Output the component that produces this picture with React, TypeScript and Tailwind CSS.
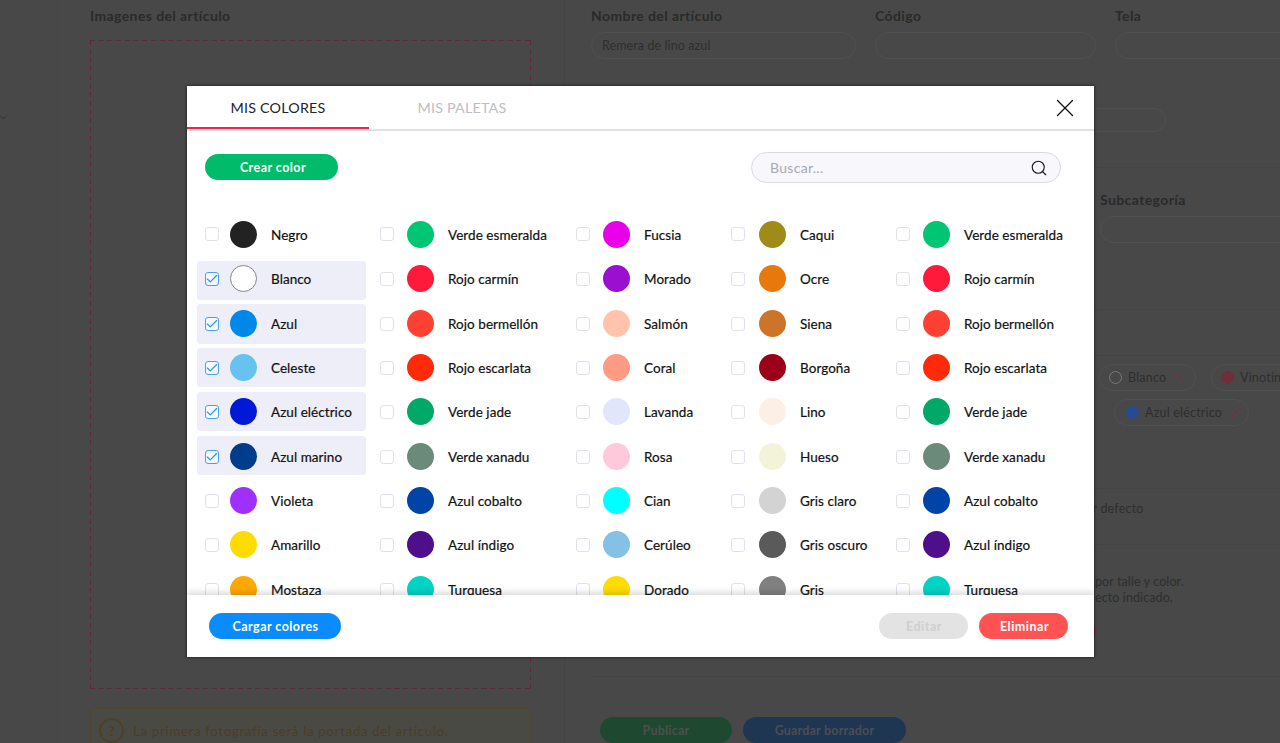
import { Check, ChevronDown, Search, X } from "lucide-react";

type Color = { n: string; c: string; on?: boolean; line?: boolean };

const second: Color[] = [
  { n: "Verde esmeralda", c: "#00c572" },
  { n: "Rojo carmín", c: "#ff1a3c" },
  { n: "Rojo bermellón", c: "#ff4133" },
  { n: "Rojo escarlata", c: "#ff2a0a" },
  { n: "Verde jade", c: "#00a968" },
  { n: "Verde xanadu", c: "#6b8a7a" },
  { n: "Azul cobalto", c: "#0044a8" },
  { n: "Azul índigo", c: "#4f0f8a" },
  { n: "Turquesa", c: "#00d4c4" },
];

const columns: { width: string; gap: string; items: Color[] }[] = [
  {
    width: "w-[175px]",
    gap: "mr-[11px]",
    items: [
      { n: "Negro", c: "#222222" },
      { n: "Blanco", c: "#ffffff", on: true, line: true },
      { n: "Azul", c: "#0088e8", on: true },
      { n: "Celeste", c: "#66c2ee", on: true },
      { n: "Azul eléctrico", c: "#0019d6", on: true },
      { n: "Azul marino", c: "#003c8c", on: true },
      { n: "Violeta", c: "#a030ff" },
      { n: "Amarillo", c: "#ffdc00" },
      { n: "Mostaza", c: "#ffa800" },
    ],
  },
  { width: "w-[196px]", gap: "mr-[13px]", items: second },
  {
    width: "w-[155px]",
    gap: "mr-[13px]",
    items: [
      { n: "Fucsia", c: "#e800e8" },
      { n: "Morado", c: "#9a0fd0" },
      { n: "Salmón", c: "#ffc4ab" },
      { n: "Coral", c: "#ff9a85" },
      { n: "Lavanda", c: "#e2e6fa" },
      { n: "Rosa", c: "#ffc9dc" },
      { n: "Cian", c: "#00ffff" },
      { n: "Cerúleo", c: "#85c1e5" },
      { n: "Dorado", c: "#ffdc00" },
    ],
  },
  {
    width: "w-[165px]",
    gap: "mr-[14px]",
    items: [
      { n: "Caqui", c: "#a08a18" },
      { n: "Ocre", c: "#e8780c" },
      { n: "Siena", c: "#cc7528" },
      { n: "Borgoña", c: "#9c0018" },
      { n: "Lino", c: "#fcefe6" },
      { n: "Hueso", c: "#f3f3d9" },
      { n: "Gris claro", c: "#d3d3d3" },
      { n: "Gris oscuro", c: "#5a5a5a" },
      { n: "Gris", c: "#808080" },
    ],
  },
  { width: "w-[198px]", gap: "mr-[13px]", items: second },
];

const selectedRow: Record<number, string> = {
  1: "h-[39px] pt-[4px]",
  2: "-mt-[1.67px] mb-[1.17px] h-[39.5px] pt-[5.67px]",
  3: "-mt-[2px] mb-[1.5px] h-[39.5px] pt-[6px]",
  4: "-mt-[2.33px] mb-[1.83px] h-[39.5px] pt-[6.33px]",
  5: "-mt-[2.67px] mb-[2.17px] h-[39.5px] pt-[6.67px]",
};

function Row({ item, gap, index }: { item: Color; gap: string; index: number }) {
  return (
    <div
      className={`flex shrink-0 items-start rounded-[3px] pl-2 ${
        item.on ? `w-[169px] bg-[#eeeef8] ${selectedRow[index]}` : "h-[39px] pt-[4px]"
      }`}
    >
      <span
        className={`flex h-[14px] w-[14px] shrink-0 items-center justify-center rounded-[3px] border-[1.5px] ${gap} ${
          index === 0 ? "mt-[6px]" : "mt-[7px]"
        } ${item.on ? "border-[#4aa0ee] bg-[#f4f9ff]" : "border-[#e0e0ee] bg-white"}`}
      >
        {item.on && <Check size={14} strokeWidth={2} className="shrink-0 text-[#2196f3]" />}
      </span>
      <span
        className={`h-[27px] w-[27px] shrink-0 rounded-full ${item.line ? "border border-[#858585]" : ""}`}
        style={{ backgroundColor: item.c }}
      />
      <span className="ml-[14px] whitespace-nowrap pt-[6px] text-[13.5px] leading-[17px] tracking-[0.05px] text-[#111111] [-webkit-text-stroke:0.2px_#111111]">
        {item.n}
      </span>
    </div>
  );
}

function Field({ label, value, width }: { label: string; value?: string; width: string }) {
  return (
    <div className={`shrink-0 ${width}`}>
      <div className="h-[18px] text-[14px] font-bold leading-[18px] tracking-[0.4px] text-[#2a2a2a]">{label}</div>
      <div className="mt-[7px] flex h-[27px] items-center rounded-full border border-[#505050] px-[10px] pt-px text-[12.5px] tracking-[0.1px] text-[#2e2e2e]">
        {value}
      </div>
    </div>
  );
}

function Chip({ label, dot, ring, className }: { label: string; dot: string; ring?: boolean; className: string }) {
  return (
    <div className={`flex h-[27px] shrink-0 items-center rounded-full border border-[#505050] ${className}`}>
      <span
        className={`h-[13px] w-[13px] shrink-0 rounded-full ${ring ? "border border-[#7a7a7a]" : ""}`}
        style={{ backgroundColor: dot }}
      />
      <span className="ml-[6px] whitespace-nowrap pt-px text-[12.5px] tracking-[0.2px] text-[#2e2e2e]">{label}</span>
      <X size={16} strokeWidth={1.3} className="ml-[6px] shrink-0 text-[#74303c]" />
    </div>
  );
}

export default function App() {
  return (
    <div className="relative flex h-[743px] w-[1280px] overflow-hidden bg-[#484848] font-['Lato',sans-serif]">
      <aside className="w-[58px] shrink-0 border-r border-[#464646] pt-[112px]">
        <ChevronDown size={11} strokeWidth={1.5} className="-ml-[2px] text-[#2c2c2c]" />
      </aside>

      <section className="w-[507px] shrink-0 border-r border-[#444444] pl-[32px] pr-[33px] pt-[7px]">
        <div className="h-[18px] text-[14px] font-bold leading-[18px] tracking-[0.4px] text-[#2a2a2a]">
          Imagenes del artículo
        </div>
        <div className="mt-[15px] h-[649px] [background:repeating-linear-gradient(90deg,#5c2a3a_0_5px,transparent_5px_8.7px)_top/100%_1px_no-repeat,repeating-linear-gradient(90deg,#5c2a3a_0_5px,transparent_5px_8.7px)_bottom/100%_1px_no-repeat,repeating-linear-gradient(0deg,#5c2a3a_0_5px,transparent_5px_8.7px)_left/1px_100%_no-repeat,repeating-linear-gradient(0deg,#5c2a3a_0_5px,transparent_5px_8.7px)_right/1px_100%_no-repeat]" />
        <div className="mt-[19px] flex h-[60px] items-start rounded-[3px] border border-[#4f4630] bg-[#4a4a45] pl-[8px] pt-[9px]">
          <span className="flex h-[25px] w-[25px] shrink-0 items-center justify-center rounded-full border-2 border-[#4d4028] text-[14px] font-bold leading-none text-[#4d4028]">
            ?
          </span>
          <span className="ml-[9px] whitespace-nowrap pt-[3px] text-[13.5px] tracking-[0.56px] text-[#4a3d28]">
            La primera fotografía será la portada del artículo.
          </span>
        </div>
      </section>

      <section className="min-w-0 flex-1 pl-[26px] pt-[7px]">
        <div className="flex w-[800px] gap-[19px]">
          <Field label="Nombre del artículo" value="Remera de lino azul" width="w-[265px]" />
          <Field label="Código" width="w-[221px]" />
          <Field label="Tela" width="w-[220px]" />
        </div>
        <div className="ml-[420px] mt-[49px] h-[24px] w-[155px] rounded-full border border-[#505050]" />
        <div className="-ml-[26px] mt-[35px] h-px bg-[#444444]" />
        <div className="ml-[509px] mt-[23px] w-[250px]">
          <Field label="Subcategoría" width="w-[250px]" />
        </div>
        <div className="-ml-[26px] mt-[66px] h-px bg-[#444444]" />
        <div className="-ml-[26px] mt-[45px] h-px bg-[#444444]" />
        <div className="ml-[508px] mt-[8px] flex gap-[15px]">
          <Chip label="Blanco" dot="#484848" ring className="w-[97px] pl-[9px]" />
          <Chip label="Vinotinto" dot="#6e2f3a" className="w-[110px] pl-[9px]" />
        </div>
        <div className="ml-[523px] mt-[8px] flex">
          <Chip label="Azul eléctrico" dot="#274a92" className="w-[135px] pl-[11px]" />
        </div>
        <div className="-ml-[26px] mt-[62px] h-px bg-[#444444]" />
        <div className="ml-[487px] mt-[11px] text-[12.5px] leading-[17px] tracking-[0.2px] text-[#2e2e2e]">
          por defecto
        </div>
        <div className="-ml-[26px] mt-[27px] h-px bg-[#444444]" />
        <div className="ml-[504px] mt-[29px] text-[12.5px] leading-[16px] tracking-[0.1px] text-[#2e2e2e]">
          <div>por talle y color.</div>
          <div>ecto indicado.</div>
        </div>
        <div className="ml-[480px] mt-[12px] h-[26px] w-[24px] rounded-full bg-[#7a1f30]" />
        <div className="mt-[32px] h-px bg-[#444444]" />
        <div className="ml-[9px] mt-[40px] flex gap-[11px]">
          <button className="h-[26px] w-[132px] rounded-full bg-[#1f4830] pt-[2px] text-[12.5px] font-bold tracking-[0.2px] text-[#4c4f4c]">
            Publicar
          </button>
          <button className="h-[26px] w-[163px] rounded-full bg-[#1f3653] pt-[2px] text-[12.5px] font-bold tracking-[0.2px] text-[#4b4d52]">
            Guardar borrador
          </button>
        </div>
      </section>

      <div className="absolute inset-0 flex items-center justify-center pl-px">
        <div className="flex h-[571px] w-[907px] flex-col overflow-hidden bg-white shadow-[0_0_3px_rgba(0,0,0,0.7)]">
          <header className="relative flex h-[45px] shrink-0 border-b-2 border-[#e2e2e2]">
            <div className="flex h-[43px] w-[182px] items-center justify-center border-b-2 border-[#f5264e] pt-[3px] text-[14.3px] tracking-[0.2px] text-[#23232d]">
              MIS COLORES
            </div>
            <div className="flex h-[43px] w-[186px] items-center justify-center border-b-2 border-transparent pt-[3px] text-[14.3px] tracking-[0.2px] text-[#bdbdc4]">
              MIS PALETAS
            </div>
            <X size={30} strokeWidth={1} className="absolute right-[14px] top-[7px] text-[#111]" />
          </header>

          <div className="min-h-0 flex-1 overflow-hidden">
            <div className="flex items-start justify-between pl-[18px] pr-[33px] pt-[21px]">
              <button className="mt-[2px] h-[26px] w-[133px] rounded-full bg-[#00bb6a] pl-[3px] pt-[3px] text-[12.5px] font-bold tracking-[0.45px] text-white">
                Crear color
              </button>
              <div className="flex h-[31px] w-[310px] items-center justify-between rounded-full border border-[#d9d9ea] bg-[#f7f7fc] pl-[18px] pr-[12px] text-[14px] tracking-[0.3px] text-[#a9a9b4]">
                Buscar...
                <Search size={18} strokeWidth={1.5} className="text-[#1a1a1a]" />
              </div>
            </div>
            <div className="mt-[34px] flex pl-[10px]">
              {columns.map((col, i) => (
                <div key={i} className={`flex shrink-0 flex-col gap-[5.33px] ${col.width}`}>
                  {col.items.map((item, j) => (
                    <Row key={item.n} item={item} gap={col.gap} index={j} />
                  ))}
                </div>
              ))}
            </div>
          </div>

          <footer className="relative flex h-[62px] shrink-0 items-start justify-between bg-white pl-[22px] pr-[26px] pt-[18px] shadow-[0_-3px_6px_rgba(0,0,0,0.14)]">
            <button className="h-[26px] w-[132px] rounded-full bg-[#0a8cff] pl-[1px] pt-[3px] text-[12.5px] font-bold tracking-[0.45px] text-white">
              Cargar colores
            </button>
            <div className="flex gap-[11px]">
              <button className="h-[26px] w-[89px] rounded-full bg-[#e3e3e3] pl-[1px] pt-[3px] text-[12.5px] font-bold tracking-[0.5px] text-[#cfcfcf]">
                Editar
              </button>
              <button className="h-[26px] w-[89px] rounded-full bg-[#ff5252] pl-[2px] pt-[3px] text-[12.5px] font-bold tracking-[0.5px] text-white">
                Eliminar
              </button>
            </div>
          </footer>
        </div>
      </div>
    </div>
  );
}
